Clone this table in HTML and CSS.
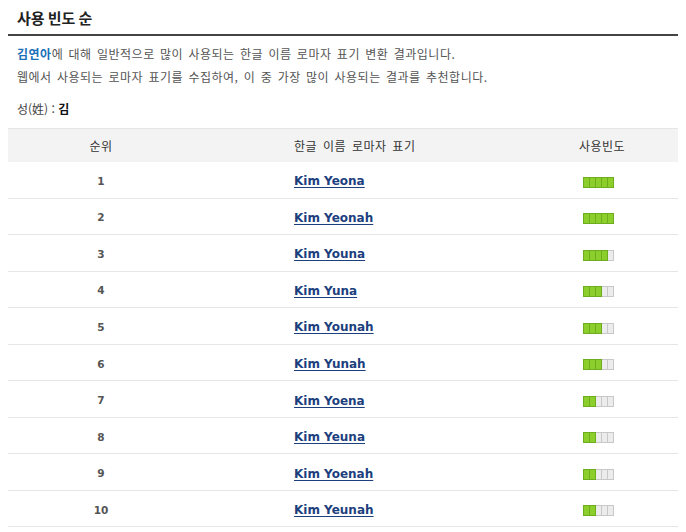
FILE: index.html
```html
<!DOCTYPE html>
<html lang="ko">
<head>
<meta charset="utf-8">
<title>사용 빈도 순</title>
<link rel="stylesheet" href="styles.css">
</head>
<body>
<div class="wrap">
  <h2 class="title">사용 빈도 순</h2>
  <p class="desc"><strong class="hl">김연아</strong>에 대해 일반적으로 많이 사용되는 한글 이름 로마자 표기 변환 결과입니다.<br>웹에서 사용되는 로마자 표기를 수집하여, 이 중 가장 많이 사용되는 결과를 추천합니다.</p>
  <p class="surname">성(姓) : <strong>김</strong></p>
  <table class="freq">
    <thead>
      <tr><th class="c-rank">순위</th><th class="c-name">한글 이름 로마자 표기</th><th class="c-bar">사용빈도</th></tr>
    </thead>
    <tbody>
      <tr><td class="c-rank">1</td><td class="c-name"><a href="#">Kim Yeona</a></td><td class="c-bar"><span class="bar"><i class="on"></i><i class="on"></i><i class="on"></i><i class="on"></i><i class="on"></i></span></td></tr>
      <tr><td class="c-rank">2</td><td class="c-name"><a href="#">Kim Yeonah</a></td><td class="c-bar"><span class="bar"><i class="on"></i><i class="on"></i><i class="on"></i><i class="on"></i><i class="on"></i></span></td></tr>
      <tr><td class="c-rank">3</td><td class="c-name"><a href="#">Kim Youna</a></td><td class="c-bar"><span class="bar"><i class="on"></i><i class="on"></i><i class="on"></i><i class="on"></i><i></i></span></td></tr>
      <tr><td class="c-rank">4</td><td class="c-name"><a href="#">Kim Yuna</a></td><td class="c-bar"><span class="bar"><i class="on"></i><i class="on"></i><i class="on"></i><i></i><i></i></span></td></tr>
      <tr><td class="c-rank">5</td><td class="c-name"><a href="#">Kim Younah</a></td><td class="c-bar"><span class="bar"><i class="on"></i><i class="on"></i><i class="on"></i><i></i><i></i></span></td></tr>
      <tr><td class="c-rank">6</td><td class="c-name"><a href="#">Kim Yunah</a></td><td class="c-bar"><span class="bar"><i class="on"></i><i class="on"></i><i class="on"></i><i></i><i></i></span></td></tr>
      <tr><td class="c-rank">7</td><td class="c-name"><a href="#">Kim Yoena</a></td><td class="c-bar"><span class="bar"><i class="on"></i><i class="on"></i><i></i><i></i><i></i></span></td></tr>
      <tr><td class="c-rank">8</td><td class="c-name"><a href="#">Kim Yeuna</a></td><td class="c-bar"><span class="bar"><i class="on"></i><i class="on"></i><i></i><i></i><i></i></span></td></tr>
      <tr><td class="c-rank">9</td><td class="c-name"><a href="#">Kim Yoenah</a></td><td class="c-bar"><span class="bar"><i class="on"></i><i class="on"></i><i></i><i></i><i></i></span></td></tr>
      <tr><td class="c-rank">10</td><td class="c-name"><a href="#">Kim Yeunah</a></td><td class="c-bar"><span class="bar"><i class="on"></i><i class="on"></i><i></i><i></i><i></i></span></td></tr>
    </tbody>
  </table>
</div>
</body>
</html>
```
FILE: styles.css
```css
html, body {
  margin: 0;
  padding: 0;
  background: #fff;
}
body {
  font-family: "Noto Sans CJK KR", "DejaVu Sans", sans-serif;
  font-size: 12px;
  color: #555;
}
.wrap {
  padding: 0 8px;
}
.title {
  margin: 0;
  height: 34px;
  line-height: 36px;
  padding-left: 9px;
  font-size: 15px;
  font-weight: bold;
  color: #222;
  word-spacing: -1px;
  border-bottom: 2px solid #444;
  box-sizing: content-box;
}
.desc {
  margin: 6px 0 0;
  padding-left: 9px;
  line-height: 23px;
  letter-spacing: 0.5px;
  word-spacing: 1.5px;
}
.hl {
  color: #1a6fb8;
  font-weight: bold;
}
.surname {
  margin: 9px 0 0;
  padding-left: 9px;
  line-height: 23px;
  color: #444;
}
.surname strong {
  color: #111;
}
.freq {
  margin-top: 8px;
  width: 670px;
  border-collapse: collapse;
  table-layout: fixed;
}
.freq th {
  background: #f3f3f3;
  border-top: 1px solid #e6e6e6;
  height: 33px;
  padding: 0;
  font-weight: normal;
  color: #333;
  font-size: 12px;
  letter-spacing: 0.5px;
  word-spacing: 2px;
}
.freq td {
  height: 35.55px;
  padding: 0;
  border-bottom: 1px solid #e6e6e6;
}
.freq .c-rank {
  width: 186px;
  text-align: center;
}
.freq td.c-rank {
  font-family: "DejaVu Sans", sans-serif;
  font-weight: bold;
  font-size: 10.5px;
  color: #555;
  padding-top: 2px;
  box-sizing: border-box;
}
.freq .c-name {
  width: 332px;
  text-align: left;
  padding-left: 100px;
  box-sizing: border-box;
}
.freq .c-bar {
  text-align: center;
}
.freq td.c-bar {
  text-align: left;
  padding-left: 57px;
}
.freq a {
  font-family: "DejaVu Sans", sans-serif;
  font-weight: bold;
  font-size: 12px;
  color: #1d3f7e;
  text-decoration: underline;
  text-underline-offset: 2px;
}
.bar {
  display: inline-flex;
  vertical-align: middle;
  padding-left: 1px;
}
.bar i {
  display: block;
  width: 5px;
  height: 9px;
  margin-left: -1px;
  background: #ececec;
  border: 1px solid #c8c8c8;
}
.bar i.on {
  background: #8ccf2c;
  border-color: #6eae1e;
  position: relative;
  z-index: 1;
}
```
